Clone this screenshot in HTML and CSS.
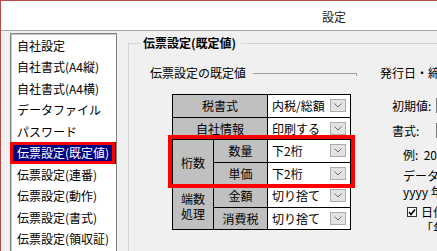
FILE: index.html
```html
<!DOCTYPE html>
<html lang="ja">
  <head>
    <meta charset="UTF-8" />
    <meta name="viewport" content="width=device-width, initial-scale=1.0" />
    <title>設定</title>
    <link rel="stylesheet" href="styles.css">
  </head>
  <body>
    <div class="window">
      <div class="titlebar">設定</div>

      <div class="client">
        <ul class="menu">
          <li>自社設定</li>
          <li>自社書式(A4縦)</li>
          <li>自社書式(A4横)</li>
          <li>データファイル</li>
          <li>パスワード</li>
          <li class="selected">伝票設定(既定値)</li>
          <li>伝票設定(連番)</li>
          <li>伝票設定(動作)</li>
          <li>伝票設定(書式)</li>
          <li>伝票設定(領収証)</li>
        </ul>

        <fieldset class="group">
          <legend>伝票設定(既定値)</legend>
          <div class="group-body">
            <div class="defaults">
              <div class="section-head">
                <span>伝票設定の既定値</span>
                <span class="rule"></span>
              </div>

              <div class="table-wrap">
                <table class="settings">
                  <colgroup>
                    <col class="c1">
                    <col class="c2">
                    <col class="c3">
                  </colgroup>
                  <tr>
                    <td class="label" colspan="2">税書式</td>
                    <td class="value"><div class="select"><span>内税/総額</span><span class="drop"><svg width="8" height="5" viewBox="0 0 8 5"><polyline points="0.5,0.5 4,4 7.5,0.5" fill="none" stroke="#6d6d6d" stroke-width="1"/></svg></span></div></td>
                  </tr>
                  <tr>
                    <td class="label" colspan="2">自社情報</td>
                    <td class="value"><div class="select"><span>印刷する</span><span class="drop"><svg width="8" height="5" viewBox="0 0 8 5"><polyline points="0.5,0.5 4,4 7.5,0.5" fill="none" stroke="#6d6d6d" stroke-width="1"/></svg></span></div></td>
                  </tr>
                  <tr>
                    <td class="label" rowspan="2">桁数</td>
                    <td class="label">数量</td>
                    <td class="value"><div class="select"><span>下2桁</span><span class="drop"><svg width="8" height="5" viewBox="0 0 8 5"><polyline points="0.5,0.5 4,4 7.5,0.5" fill="none" stroke="#6d6d6d" stroke-width="1"/></svg></span></div></td>
                  </tr>
                  <tr>
                    <td class="label">単価</td>
                    <td class="value"><div class="select"><span>下2桁</span><span class="drop"><svg width="8" height="5" viewBox="0 0 8 5"><polyline points="0.5,0.5 4,4 7.5,0.5" fill="none" stroke="#6d6d6d" stroke-width="1"/></svg></span></div></td>
                  </tr>
                  <tr>
                    <td class="label two-line" rowspan="2">端数<br>処理</td>
                    <td class="label">金額</td>
                    <td class="value"><div class="select"><span>切り捨て</span><span class="drop"><svg width="8" height="5" viewBox="0 0 8 5"><polyline points="0.5,0.5 4,4 7.5,0.5" fill="none" stroke="#6d6d6d" stroke-width="1"/></svg></span></div></td>
                  </tr>
                  <tr>
                    <td class="label">消費税</td>
                    <td class="value"><div class="select"><span>切り捨て</span><span class="drop"><svg width="8" height="5" viewBox="0 0 8 5"><polyline points="0.5,0.5 4,4 7.5,0.5" fill="none" stroke="#6d6d6d" stroke-width="1"/></svg></span></div></td>
                  </tr>
                </table>
                <div class="highlight"></div>
              </div>
            </div>

            <div class="date-format">
              <div class="col-head">発行日・締め日の書式</div>
              <div class="field first">
                <span class="field-label">初期値:</span>
                <span class="input"></span>
              </div>
              <div class="field">
                <span class="field-label">書式:</span>
                <span class="input"></span>
              </div>
              <div class="example">例:&nbsp;&nbsp;2019年04月01日</div>
              <div class="hint">データ形式の書式<br>yyyy 年 mm 月 dd 日</div>
              <div class="check">
                <span class="box"><svg width="8" height="8" viewBox="0 0 8 8"><polyline points="1,4 3,6.5 7,1.5" fill="none" stroke="#000" stroke-width="1.6"/></svg></span>
                <span>日付の区切りに<br>「年月日」を使用する</span>
              </div>
            </div>
          </div>
        </fieldset>
      </div>
    </div>
  </body>
</html>
```

FILE: styles.css
```css
body {
  margin: 0;
  width: 437px;
  height: 251px;
  overflow: hidden;
  background-color: #f0f0f0;
  font-family: "Noto Sans CJK JP", sans-serif;
  font-size: 12px;
  color: #000;
}
.window {
  width: 666px;
  height: 250px;
  border-top: 1px solid #b94a48;
  border-left: 1px solid #b94a48;
}
.titlebar {
  height: 27px;
  padding-top: 2px;
  line-height: 27px;
  text-align: center;
  background-color: #fff;
  border-bottom: 1px solid #a8a8a8;
  color: #222;
}
.client {
  display: flex;
  align-items: flex-start;
}

/* left list */
.menu {
  list-style: none;
  margin: 2px 0 0 9px;
  padding: 1px 0 0 0;
  width: 105px;
  height: 240px;
  background-color: #fff;
  border: 1px solid #828282;
  box-shadow: inset 1px 1px 0 #c8c8c8;
}
.menu li {
  height: 21.45px;
  line-height: 21.45px;
  padding-left: 6px;
  white-space: nowrap;
}
.menu li.selected {
  position: relative;
  background-color: #000080;
  color: #fff;
}
.menu li.selected::after {
  content: "";
  position: absolute;
  left: -1px;
  right: 1px;
  top: 0;
  bottom: 0;
  border: 3.5px solid #f00;
}

/* group box */
.group {
  flex: 1;
  min-width: 0;
  height: 250px;
  margin: 4px 10px 0 11px;
  padding: 14px 0 0 21px;
  border: 1px solid #d5d5d5;
  box-sizing: border-box;
}
.group legend {
  margin-left: -9px;
  padding: 0 5px 0 2px;
  line-height: 16px;
  font-weight: bold;
}
.group-body {
  display: flex;
  align-items: flex-start;
}
.defaults {
  width: 207px;
  flex: none;
}
.section-head {
  display: flex;
  align-items: center;
  height: 16px;
  line-height: 16px;
  white-space: nowrap;
}
.rule {
  flex: 1;
  height: 2px;
  margin: 3px 0 0 7px;
  border-top: 1px solid #a0a0a0;
  border-right: 1px solid #a0a0a0;
}

/* settings table */
.table-wrap {
  position: relative;
  margin: 13px 0 0 22px;
  width: 178px;
}
.settings {
  border-collapse: collapse;
  table-layout: fixed;
  width: 178px;
  border: 1px solid #000;
}
.settings col.c1 {
  width: 41px;
}
.settings col.c2 {
  width: 54px;
}
.settings col.c3 {
  width: 83px;
}
.settings tr {
  height: 22.5px;
}
.settings td {
  border: 1px solid #000;
  padding: 0;
  white-space: nowrap;
}
.label {
  background-color: #c0c0c0;
  text-align: center;
}
.label.two-line {
  line-height: 15px;
  vertical-align: middle;
  padding-bottom: 2px;
}
.value {
  background-color: #fff;
}
.select {
  display: flex;
  align-items: center;
  justify-content: space-between;
  padding: 0 4px 0 4px;
}
.drop {
  display: flex;
  align-items: center;
  justify-content: center;
  width: 14px;
  height: 11px;
  border: 1px solid #adadad;
  background-color: #e3e3e3;
}
.highlight {
  position: absolute;
  left: -4px;
  top: 41px;
  width: 179px;
  height: 45px;
  border: 4px solid #f00;
}

/* right column */
.date-format {
  margin-left: 23px;
  white-space: nowrap;
}
.col-head {
  line-height: 16px;
}
.field {
  display: flex;
  align-items: center;
  height: 15px;
  margin-top: 10px;
  padding-left: 12px;
}
.field.first {
  margin-top: 17px;
}
.field-label {
  width: 44px;
  flex: none;
}
.input {
  width: 120px;
  height: 13px;
  border: 1px solid #7a7a7a;
  background-color: #fff;
}
.example {
  margin-top: 9px;
  padding-left: 23px;
  line-height: 16px;
}
.hint {
  margin-top: 5px;
  padding-left: 23px;
  line-height: 16px;
}
.check {
  display: flex;
  align-items: flex-start;
  margin-top: 4px;
  padding-left: 27px;
  line-height: 16px;
}
.check .box {
  display: flex;
  align-items: center;
  justify-content: center;
  width: 8px;
  height: 8px;
  margin: 3px 4px 0 0;
  border: 1px solid #333;
  background-color: #fff;
}
```
